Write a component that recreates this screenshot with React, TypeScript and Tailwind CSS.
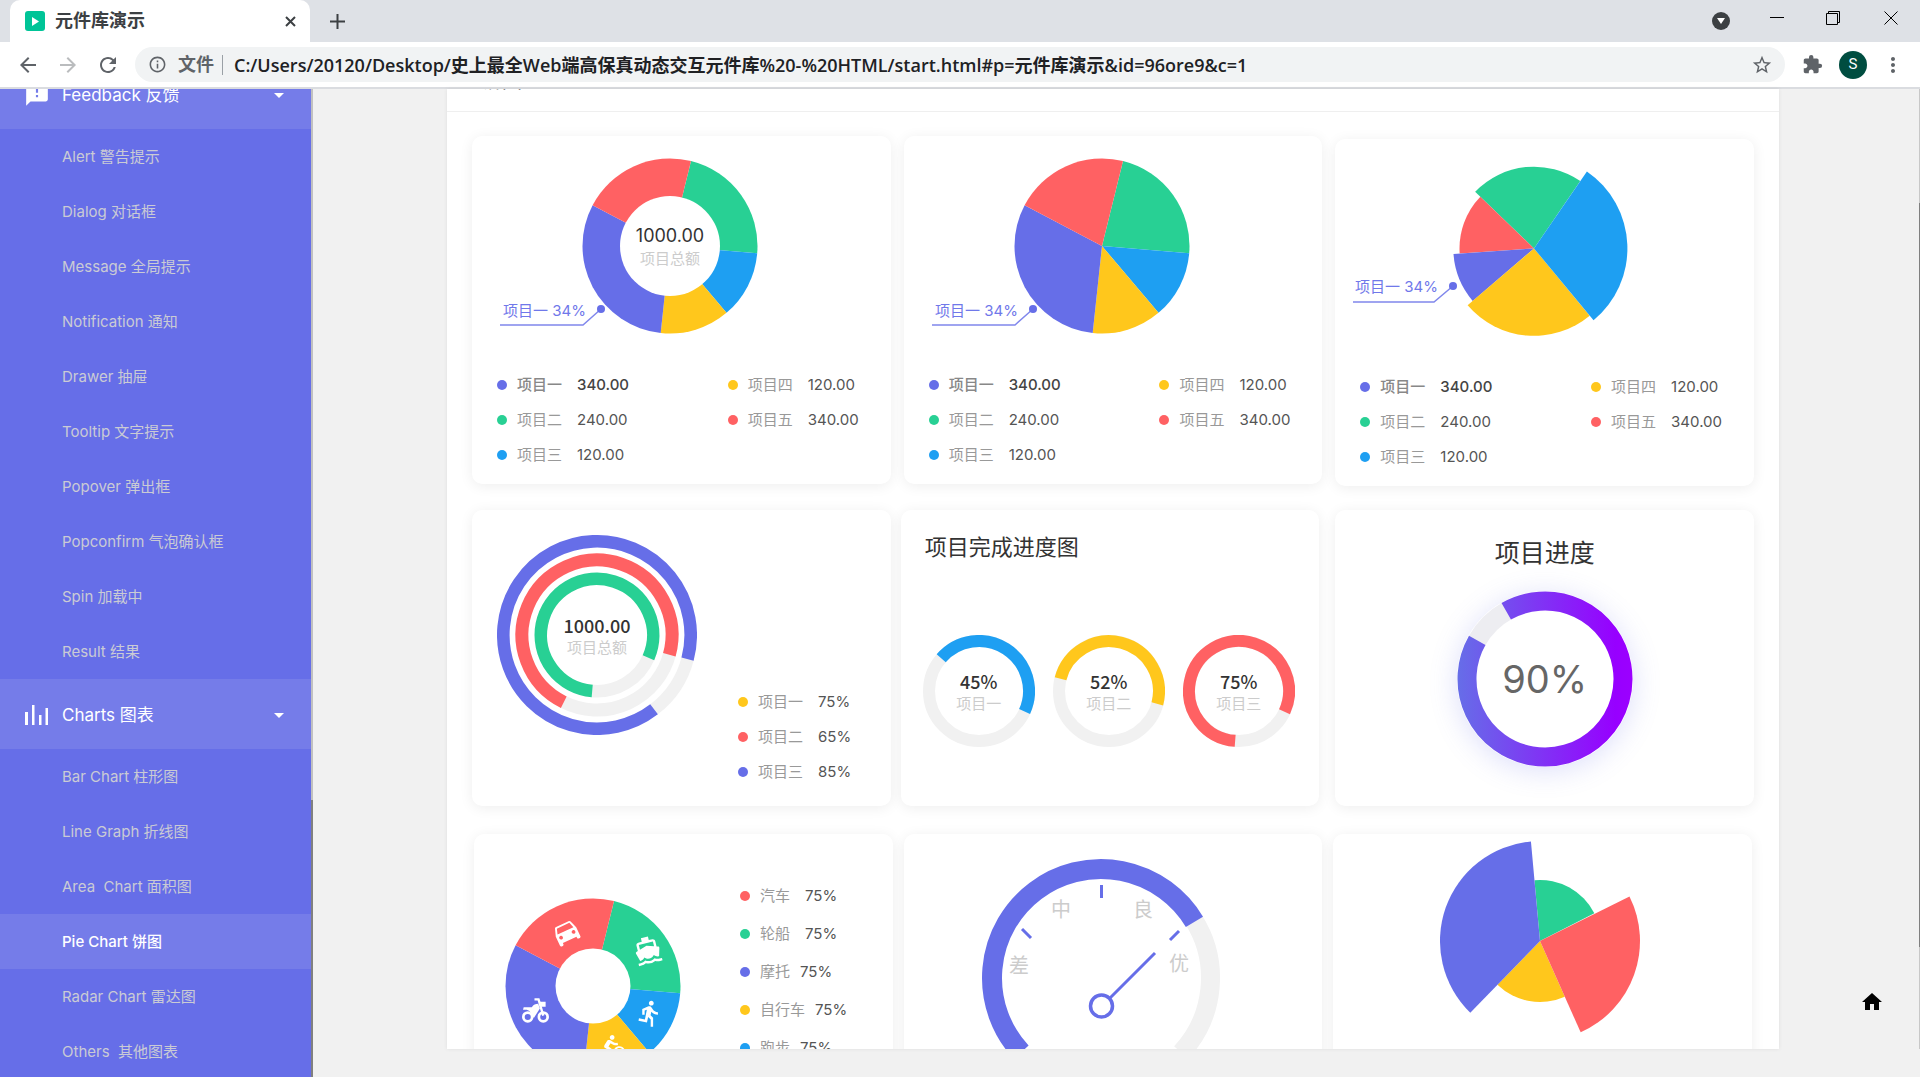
import type { ReactNode } from "react";
import {
  MdArrowBack,
  MdArrowDropDown,
  MdArrowForward,
  MdDirectionsBike,
  MdDirectionsBoat,
  MdDirectionsCar,
  MdDirectionsRun,
  MdExtension,
  MdFeedback,
  MdHome,
  MdInfoOutline,
  MdMoreVert,
  MdRefresh,
  MdStarBorder,
} from "react-icons/md";

const INDIGO = "#666ee8";
const GREEN = "#28d094";
const BLUE = "#1e9ff2";
const YELLOW = "#ffc71c";
const RED = "#ff6163";
const TRACK = "#f1f1f1";

/* ---------- chart geometry (degrees run clockwise from twelve o'clock) ---------- */

function point(cx: number, cy: number, r: number, deg: number) {
  const a = (deg * Math.PI) / 180;
  return `${(cx + r * Math.sin(a)).toFixed(2)} ${(cy - r * Math.cos(a)).toFixed(2)}`;
}

function arcPath(cx: number, cy: number, r: number, from: number, to: number) {
  const sweep = (to - from + 360) % 360;
  return `M${point(cx, cy, r, from)}A${r} ${r} 0 ${sweep > 180 ? 1 : 0} 1 ${point(cx, cy, r, to)}`;
}

type SliceProps = { cx: number; cy: number; r: number; from: number; to: number; fill: string };

function Slice({ cx, cy, r, from, to, fill }: SliceProps) {
  return <path d={`${arcPath(cx, cy, r, from, to)}L${cx} ${cy}Z`} fill={fill} />;
}

function Arc({ cx, cy, r, from, to, width, stroke }: Omit<SliceProps, "fill"> & { width: number; stroke: string }) {
  return <path d={arcPath(cx, cy, r, from, to)} fill="none" stroke={stroke} strokeWidth={width} />;
}

const SHARES = [
  { from: 13.9, to: 94.8, fill: GREEN },
  { from: 94.8, to: 139.8, fill: BLUE },
  { from: 139.8, to: 186.1, fill: YELLOW },
  { from: 186.1, to: 297.8, fill: INDIGO },
  { from: 297.8, to: 13.9, fill: RED },
];

function Pie({ cx, cy, r }: { cx: number; cy: number; r: number }) {
  return (
    <>
      {SHARES.map((s) => (
        <Slice key={s.fill} cx={cx} cy={cy} r={r} {...s} />
      ))}
    </>
  );
}

/* ---------- shared pieces ---------- */

function Card({ outer = "", className, children }: { outer?: string; className: string; children: ReactNode }) {
  return (
    <section className={`min-w-0 flex-1 rounded-[10px] bg-white shadow-[0_2px_14px_rgba(0,0,0,0.07)] ${outer}`}>
      <div className={className}>{children}</div>
    </section>
  );
}

type LegendRow = { dot: string; label: string; value: string; strong?: boolean; gap?: string };

function Legend({ rows, rowClass = "h-[35px]" }: { rows: LegendRow[]; rowClass?: string }) {
  return (
    <ul className="text-[15px] leading-5">
      {rows.map((r) => (
        <li key={r.label} className={`flex items-center ${rowClass} ${r.strong ? "font-medium" : ""}`}>
          <span className="mr-[10px] size-[10px] rounded-full" style={{ backgroundColor: r.dot }} />
          <span className={r.strong ? "text-[#888]" : "text-[#999]"}>{r.label}</span>
          <span className={`${r.gap ?? "ml-[15px]"} ${r.strong ? "text-[#444]" : "text-[#555]"}`}>{r.value}</span>
        </li>
      ))}
    </ul>
  );
}

function PieLegend() {
  return (
    <div className="mt-8 flex justify-between pr-8 pl-[25px]">
      <Legend
        rows={[
          { dot: INDIGO, label: "项目一", value: "340.00", strong: true },
          { dot: GREEN, label: "项目二", value: "240.00" },
          { dot: BLUE, label: "项目三", value: "120.00" },
        ]}
      />
      <Legend
        rows={[
          { dot: YELLOW, label: "项目四", value: "120.00" },
          { dot: RED, label: "项目五", value: "340.00" },
        ]}
      />
    </div>
  );
}

function Callout({ points, dotX, dotY, textX, textY }: { points: string; dotX: number; dotY: number; textX: number; textY: number }) {
  return (
    <g>
      <polyline points={points} fill="none" stroke="#8087ec" strokeWidth="1.5" />
      <circle cx={dotX} cy={dotY} r="4" fill={INDIGO} />
      <text x={textX} y={textY} fontSize="15" fill="#7078ea">
        项目一 34%
      </text>
    </g>
  );
}

const SIDE_CALLOUT = { points: "1,167 84,167 102,151", dotX: 102, dotY: 151, textX: 4, textY: 158 };

/* ---------- cards ---------- */

function DonutCard() {
  return (
    <Card className="h-[348px] pt-[22px]">
      <div className="relative ml-[27px] w-[260px]">
        <svg width="260" height="177" viewBox="0 0 260 177">
          <Pie cx={171} cy={88} r={87.5} />
          <circle cx="171" cy="88" r="50" fill="#fff" />
          <Callout {...SIDE_CALLOUT} />
        </svg>
        <div className="absolute inset-y-0 right-0 flex w-[178px] flex-col items-center justify-center">
          <span className="text-lg leading-6 text-[#333]">1000.00</span>
          <span className="text-[15px] leading-[22px] text-[#ccc]">项目总额</span>
        </div>
      </div>
      <PieLegend />
    </Card>
  );
}

function PieCard() {
  return (
    <Card outer="mx-[13px]" className="h-[348px] pt-[22px]">
      <svg className="ml-[27px]" width="260" height="177" viewBox="0 0 260 177">
        <Pie cx={171} cy={88} r={87.5} />
        <Callout {...SIDE_CALLOUT} />
      </svg>
      <PieLegend />
    </Card>
  );
}

function RoseCard() {
  const c = { cx: 182, cy: 87.4 };
  return (
    <Card outer="mt-[3px]" className="h-[347px] pt-[22px]">
      <svg className="ml-[17px]" width="280" height="176" viewBox="0 0 280 176">
        <Slice {...c} r={81.7} from={313.9} to={34.5} fill={GREEN} />
        <Slice {...c} r={74.5} from={266} to={313.9} fill={RED} />
        <Slice {...c} r={80.7} from={229.4} to={266} fill={INDIGO} />
        <Slice {...c} r={87.4} from={140.4} to={229.4} fill={YELLOW} />
        <Slice {...c} r={93.4} from={34.5} to={140.4} fill={BLUE} />
        <Callout points="1,141 82,141 101,125" dotX={101} dotY={125} textX={3} textY={131} />
      </svg>
      <PieLegend />
    </Card>
  );
}

function RingLabel({ value, label }: { value: string; label: string }) {
  return (
    <div className="absolute inset-0 flex flex-col items-center justify-center pt-[2px]">
      <span className="font-[Noto_Sans_CJK_SC] text-lg leading-6 font-medium text-[#333]">{value}</span>
      <span className="text-[15px] leading-[22px] text-[#ccc]">{label}</span>
    </div>
  );
}

function RingsCard() {
  const c = { cx: 100, cy: 100 };
  return (
    <Card className="flex h-[296px] pt-[25px] pl-[25px]">
      <div className="relative size-[200px]">
        <svg width="200" height="200" viewBox="0 0 200 200">
          <Arc {...c} r={93.7} from={104} to={143} width={12.6} stroke={TRACK} />
          <Arc {...c} r={93.7} from={142.5} to={104.9} width={12.6} stroke={INDIGO} />
          <Arc {...c} r={75} from={104} to={207} width={13} stroke={TRACK} />
          <Arc {...c} r={75} from={206.3} to={105.3} width={13} stroke={RED} />
          <Arc {...c} r={56.2} from={113} to={186} width={12.6} stroke={TRACK} />
          <Arc {...c} r={56.2} from={184.9} to={113.8} width={12.6} stroke={GREEN} />
        </svg>
        <RingLabel value="1000.00" label="项目总额" />
      </div>
      <div className="ml-[41px] self-end pb-[17px]">
        <Legend
          rows={[
            { dot: YELLOW, label: "项目一", value: "75%" },
            { dot: RED, label: "项目二", value: "65%" },
            { dot: INDIGO, label: "项目三", value: "85%" },
          ]}
        />
      </div>
    </Card>
  );
}

const PROGRESS = [
  { label: "项目一", value: "45%", from: 310.9, to: 114.3, color: BLUE },
  { label: "项目二", value: "52%", from: 284.3, to: 104.9, color: YELLOW },
  { label: "项目三", value: "75%", from: 184.4, to: 114.5, color: RED },
];

function ProgressCard() {
  return (
    <Card outer="mr-4 ml-[10px]" className="h-[296px] px-[22px] pt-[19px]">
      <h2 className="pl-[2px] font-[Noto_Sans_CJK_SC] text-[22px] leading-8 text-[#333]">项目完成进度图</h2>
      <div className="mt-[74px] flex gap-[18px]">
        {PROGRESS.map((p) => (
          <div key={p.label} className="relative size-[112px]">
            <svg width="112" height="112" viewBox="0 0 112 112">
              <circle cx="56" cy="56" r="50" fill="none" stroke={TRACK} strokeWidth="12" />
              <Arc cx={56} cy={56} r={50} from={p.from} to={p.to} width={12} stroke={p.color} />
            </svg>
            <RingLabel value={p.value} label={p.label} />
          </div>
        ))}
      </div>
    </Card>
  );
}

function GradientRingCard() {
  return (
    <Card className="flex h-[296px] flex-col items-center pt-[23px]">
      <h2 className="font-[Noto_Sans_CJK_SC] text-[25px] leading-9 text-[#333]">项目进度</h2>
      <div className="relative mt-[22px] size-[176px] rounded-full shadow-[0_4px_28px_rgba(102,110,232,0.22)]">
        <svg width="176" height="176" viewBox="0 0 176 176">
          <defs>
            <linearGradient id="ring-fill" gradientUnits="userSpaceOnUse" x1="0" y1="0" x2="176" y2="0">
              <stop offset="0" stopColor={INDIGO} />
              <stop offset="0.9" stopColor="#9700ff" />
              <stop offset="1" stopColor="#9c00ff" />
            </linearGradient>
          </defs>
          <circle cx="88" cy="88" r="87" fill="#fff" />
          <Arc cx={88} cy={88} r={78} from={299} to={331} width={19} stroke="#ededf1" />
          <Arc cx={88} cy={88} r={78} from={330.2} to={299.7} width={19} stroke="url(#ring-fill)" />
        </svg>
        <div className="absolute inset-0 flex items-center justify-center text-[38px] text-[#666]">90%</div>
      </div>
    </Card>
  );
}

function Motorbike() {
  return (
    <svg x="17" y="100" width="27" height="25" viewBox="0 0 80 74">
      <g fill="none" stroke="#fff">
        <circle cx="17" cy="56" r="13" strokeWidth="8" />
        <circle cx="63" cy="56" r="13" strokeWidth="8" />
        <path d="M37 4H49L63 52" strokeWidth="7" />
      </g>
      <path
        d="M5 27H29C34 20 40 17 48 17L53 31L36 58H30C30 46 24 38 14 35H3ZM52 11H70V26H57Z"
        fill="#fff"
      />
    </svg>
  );
}

function TransportCard() {
  return (
    <Card className="flex h-[348px] pl-[31px]">
      <svg className="mt-[64px] text-white" width="176" height="176" viewBox="0 0 176 176">
        <Pie cx={88} cy={88} r={87.5} />
        <circle cx="88" cy="88" r="37.5" fill="#fff" />
        <g transform="rotate(-25 61 34)">
          <MdDirectionsCar x="46" y="19" size={30} />
        </g>
        <g transform="rotate(-14 142 52)">
          <MdDirectionsBoat x="128" y="38" size={29} />
        </g>
        <Motorbike />
        <MdDirectionsRun x="130" y="101" size={29} />
        <g transform="rotate(-12 105 149)">
          <MdDirectionsBike x="91" y="136" size={28} />
        </g>
      </svg>
      <div className="mt-[43px] ml-[59px]">
        <Legend
          rowClass="h-[38px]"
          rows={[
            { dot: RED, label: "汽车", value: "75%" },
            { dot: GREEN, label: "轮船", value: "75%" },
            { dot: INDIGO, label: "摩托", value: "75%", gap: "ml-[10px]" },
            { dot: YELLOW, label: "自行车", value: "75%", gap: "ml-[10px]" },
            { dot: BLUE, label: "跑步", value: "75%", gap: "ml-[10px]" },
          ]}
        />
      </div>
    </Card>
  );
}

function GaugeCard() {
  return (
    <Card outer="mx-[11px]" className="h-[348px] pt-6">
      <svg className="ml-[77px]" width="240" height="215" viewBox="0 0 240 215">
        <Arc cx={120} cy={120} r={109.5} from={58} to={133} width={19} stroke={TRACK} />
        <Arc cx={120} cy={120} r={109} from={227} to={59} width={20} stroke={INDIGO} />
        <g stroke={INDIGO} strokeWidth="3" fill="none">
          <path d="M120.500 27V40" />
          <path d="M41 71L50 80" />
          <path d="M198 73L189 82" />
          <path d="M129 140L174 95" />
          <circle cx="120.500" cy="148" r="11" strokeWidth="3.500" />
        </g>
        <g fontSize="20" fill="#ccc" textAnchor="middle">
          <text x="80" y="59">中</text>
          <text x="162" y="59">良</text>
          <text x="38" y="115">差</text>
          <text x="198" y="113">优</text>
        </g>
      </svg>
    </Card>
  );
}

function WingCard() {
  const c = { cx: 100, cy: 100 };
  return (
    <Card className="h-[348px] pt-[7px]">
      <svg className="ml-[107px]" width="200" height="200" viewBox="0 0 200 200">
        <Slice {...c} r={61} from={354.8} to={63} fill={GREEN} />
        <Slice {...c} r={61} from={156} to={224.2} fill={YELLOW} />
        <Slice {...c} r={100} from={63.5} to={156} fill={RED} />
        <Slice {...c} r={100} from={224.2} to={354.8} fill={INDIGO} />
      </svg>
    </Card>
  );
}

/* ---------- browser window ---------- */

function TabStrip() {
  return (
    <div className="flex h-[42px] shrink-0 bg-[#dee1e6] pl-[10px]">
      <div className="flex w-[300px] items-center rounded-t-[10px] bg-white pr-3 pl-[15px]">
        <span className="flex size-5 items-center justify-center rounded-[3px] bg-[#00c497]">
          <svg width="7" height="9" viewBox="0 0 7 9">
            <path d="M0 0L7 4.500L0 9Z" fill="#fff" />
          </svg>
        </span>
        <span className="ml-[10px] flex-1 text-[18px] leading-6 font-bold text-[#3c4043]">元件库演示</span>
        <button type="button" aria-label="关闭标签页" className="flex size-4 items-center justify-center">
          <svg width="11" height="11" viewBox="0 0 11 11" stroke="#3c4043" strokeWidth="2">
            <path d="M1 1L10 10M10 1L1 10" />
          </svg>
        </button>
      </div>
      <button type="button" aria-label="新标签页" className="ml-[19px] flex w-4 items-center justify-center">
        <svg width="15" height="15" viewBox="0 0 15 15" stroke="#3c4043" strokeWidth="2">
          <path d="M7.500 0V15M0 7.500H15" />
        </svg>
      </button>
      <div className="ml-auto flex items-center pr-[22px]">
        <button type="button" aria-label="搜索标签页" className="flex size-[18px] items-center justify-center rounded-full bg-[#3c4043]">
          <svg width="8" height="6" viewBox="0 0 8 6" fill="#fff">
            <path d="M0 0H8L4 6Z" />
          </svg>
        </button>
        <div className="mb-[6px] flex items-center">
          <button type="button" aria-label="最小化" className="ml-10">
            <svg width="14" height="14" viewBox="0 0 14 14" stroke="#000">
              <path d="M0 6.500H14" />
            </svg>
          </button>
          <button type="button" aria-label="还原" className="ml-[42px]">
            <svg width="14" height="14" viewBox="0 0 14 14" stroke="#000" fill="none">
              <path d="M0.500 2.500H11.500V13.500H0.500ZM2.500 2.500V0.500H13.500V11.500H11.500" />
            </svg>
          </button>
          <button type="button" aria-label="关闭" className="ml-11">
            <svg width="14" height="14" viewBox="0 0 14 14" stroke="#000">
              <path d="M0.500 0.500L13.500 13.500M13.500 0.500L0.500 13.500" />
            </svg>
          </button>
        </div>
      </div>
    </div>
  );
}

function Toolbar() {
  return (
    <div className="flex h-[47px] shrink-0 items-center border-b-2 border-[#dadce0] bg-white pr-[15px] pl-4 text-[#5f6368]">
      <button type="button" aria-label="后退">
        <MdArrowBack size={24} />
      </button>
      <button type="button" aria-label="前进" className="ml-4 text-[#babcbe]">
        <MdArrowForward size={24} />
      </button>
      <button type="button" aria-label="重新加载" className="ml-4">
        <MdRefresh size={24} />
      </button>
      <div className="ml-[15px] flex h-[35px] flex-1 items-center rounded-full bg-[#f1f3f4] pr-3 pl-[13px]">
        <MdInfoOutline size={19} />
        <label htmlFor="address" className="ml-[11px] text-[18px] leading-6 font-bold">
          文件
        </label>
        <span className="mr-[11px] ml-2 h-5 w-px bg-[#9aa0a6]" />
        <input
          id="address"
          type="text"
          defaultValue="C:/Users/20120/Desktop/史上最全Web端高保真动态交互元件库%20-%20HTML/start.html#p=元件库演示&id=96ore9&c=1"
          className="min-w-0 flex-1 bg-transparent font-['Open_Sans','Noto_Sans_CJK_SC',sans-serif] text-[18px] leading-6 font-semibold text-[#202124] outline-none"
        />
        <button type="button" aria-label="收藏">
          <MdStarBorder size={22} />
        </button>
      </div>
      <button type="button" aria-label="扩展程序" className="ml-[17px]">
        <MdExtension size={21} />
      </button>
      <button
        type="button"
        aria-label="个人资料"
        className="ml-4 flex size-7 items-center justify-center rounded-full bg-[#004d40] font-[Roboto] text-[15px] text-white"
      >
        S
      </button>
      <button type="button" aria-label="更多" className="ml-[14px]">
        <MdMoreVert size={24} />
      </button>
    </div>
  );
}

/* ---------- sidebar ---------- */

function GroupHeader({ icon, label }: { icon: ReactNode; label: string }) {
  return (
    <button
      type="button"
      className="flex h-[70px] w-full shrink-0 items-center bg-[#757ce9] pt-px pr-5 pl-6 text-left text-[17px] leading-6 text-white"
    >
      <span className="w-[38px]">{icon}</span>
      <span className="flex-1">{label}</span>
      <MdArrowDropDown size={24} />
    </button>
  );
}

function NavItem({ label, active }: { label: string; active?: boolean }) {
  return (
    <li>
      <a
        href={`#${label}`}
        className={`flex h-[55px] items-center pl-[62px] text-[15px] leading-5 whitespace-pre ${
          active ? "bg-[#757ce9] font-medium text-white" : "text-[#cacbd4]"
        }`}
      >
        {label}
      </a>
    </li>
  );
}

const FEEDBACK = [
  "Alert 警告提示",
  "Dialog 对话框",
  "Message 全局提示",
  "Notification 通知",
  "Drawer 抽屉",
  "Tooltip 文字提示",
  "Popover 弹出框",
  "Popconfirm 气泡确认框",
  "Spin 加载中",
  "Result 结果",
];

const CHARTS = [
  "Bar Chart 柱形图",
  "Line Graph 折线图",
  "Area  Chart 面积图",
  "Pie Chart 饼图",
  "Radar Chart 雷达图",
  "Others  其他图表",
];

function Sidebar() {
  return (
    <aside className="flex w-[313px] shrink-0">
      <nav className="flex-1 overflow-hidden bg-[#666ee8]">
        <div className="flex h-10 items-end overflow-hidden">
          <GroupHeader icon={<MdFeedback size={26} />} label="Feedback 反馈" />
        </div>
        <ul>
          {FEEDBACK.map((label) => (
            <NavItem key={label} label={label} />
          ))}
        </ul>
        <GroupHeader
          icon={
            <svg width="24" height="20" viewBox="0 0 24 20" fill="#fff">
              <path d="M1 7h3v13H1zM8 0h2.500v20H8zM15 10h2.500v10H15zM21.500 3H24v17h-2.500z" />
            </svg>
          }
          label="Charts 图表"
        />
        <ul>
          {CHARTS.map((label) => (
            <NavItem key={label} label={label} active={label.startsWith("Pie")} />
          ))}
        </ul>
      </nav>
      <div className="w-[2px] bg-[#808080]">
        <div className="h-[72%] bg-[#c1c1c1]" />
      </div>
    </aside>
  );
}

export default function App() {
  return (
    <div className="flex h-screen flex-col overflow-hidden bg-[#f1f1f1] font-['Inter','Noto_Sans_CJK_SC',sans-serif]">
      <TabStrip />
      <Toolbar />
      <div className="flex min-h-0 flex-1">
        <Sidebar />
        <div className="relative flex min-w-0 flex-1 pb-7">
          <main className="mr-[140px] ml-[134px] flex min-w-0 flex-1 flex-col overflow-hidden bg-white shadow-[0_0_4px_rgba(0,0,0,0.08)]">
            <header className="flex h-[23px] shrink-0 items-end overflow-hidden border-b border-[#efefef]">
              <h1 className="shrink-0 pb-[18px] pl-[35px] text-[20px] leading-6 text-[#666]">饼图</h1>
            </header>
            <div className="flex shrink-0 items-start px-[25px] pt-6">
              <DonutCard />
              <PieCard />
              <RoseCard />
            </div>
            <div className="flex shrink-0 items-start px-[25px] pt-6">
              <RingsCard />
              <ProgressCard />
              <GradientRingCard />
            </div>
            <div className="flex shrink-0 items-start px-[27px] pt-7">
              <TransportCard />
              <GaugeCard />
              <WingCard />
            </div>
          </main>
          <div className="w-px bg-[#c8c8c8] pt-[114px]">
            <div className="h-[88%] bg-[#808080]" />
          </div>
          <a href="#home" aria-label="首页" className="absolute right-9 bottom-[63px] text-black">
            <MdHome size={24} />
          </a>
        </div>
      </div>
    </div>
  );
}
